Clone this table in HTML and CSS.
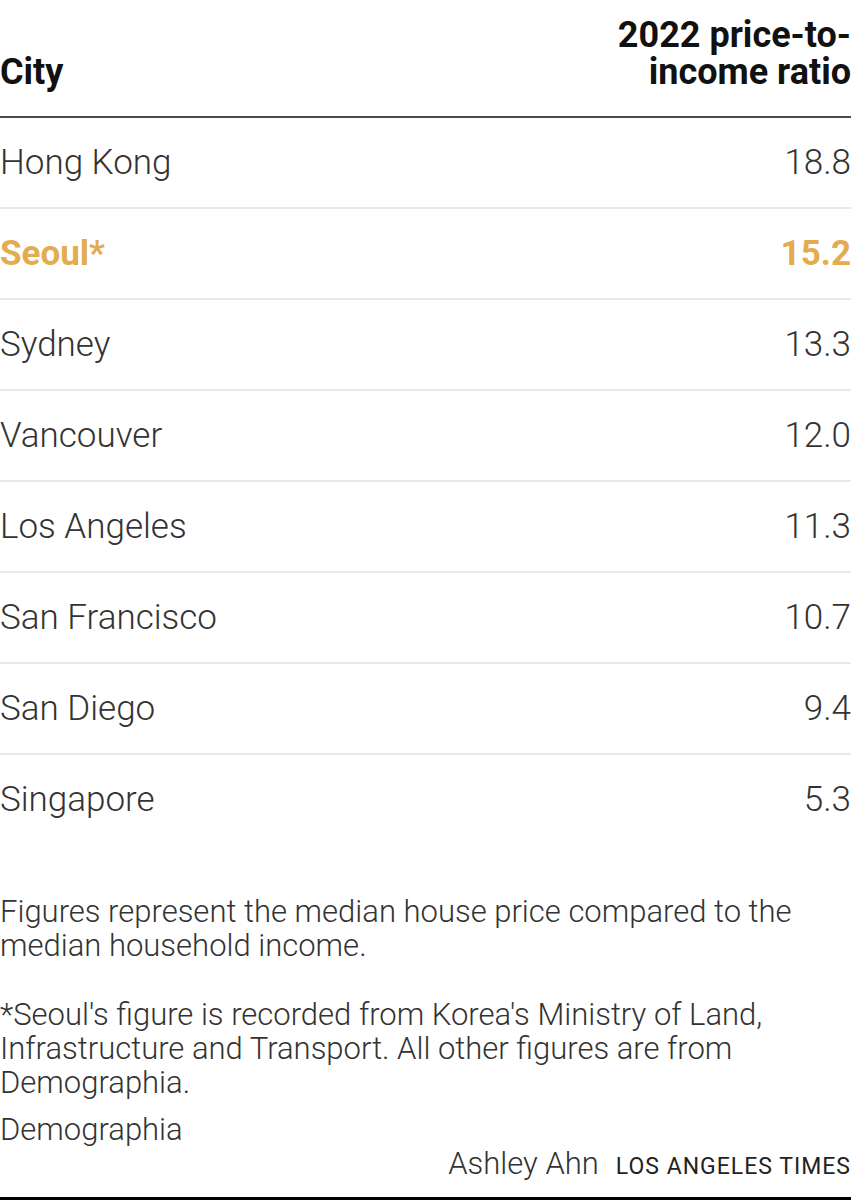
FILE: index.html
```html
<!DOCTYPE html>
<html>
<head>
<meta charset="utf-8">
<link rel="stylesheet" href="styles.css">
</head>
<body>
<div class="graphic">
  <div class="table">
    <div class="thead">
      <div class="th th-city">City</div>
      <div class="th th-val">2022 price-to-<br>income ratio</div>
    </div>
    <div class="row"><div class="city">Hong Kong</div><div class="val">18.8</div></div>
    <div class="row hl"><div class="city">Seoul*</div><div class="val">15.2</div></div>
    <div class="row"><div class="city">Sydney</div><div class="val">13.3</div></div>
    <div class="row"><div class="city">Vancouver</div><div class="val">12.0</div></div>
    <div class="row"><div class="city">Los Angeles</div><div class="val">11.3</div></div>
    <div class="row"><div class="city">San Francisco</div><div class="val">10.7</div></div>
    <div class="row"><div class="city">San Diego</div><div class="val">9.4</div></div>
    <div class="row last"><div class="city">Singapore</div><div class="val">5.3</div></div>
  </div>
  <div class="notes">
    <p class="note">Figures represent the median house price compared to the median household income.</p>
    <p class="note">*Seoul's figure is recorded from Korea's Ministry of Land, Infrastructure and Transport. All other figures are from Demographia.</p>
    <p class="source">Demographia</p>
    <div class="credit"><span class="author">Ashley Ahn</span><span class="org">LOS ANGELES TIMES</span></div>
  </div>
  <div class="bottom-bar"></div>
</div>
</body>
</html>
```
FILE: styles.css
```css
html, body {
  margin: 0;
  padding: 0;
  background: #fff;
}
body {
  font-family: Roboto, "Liberation Sans", sans-serif;
  color: #333;
}
.graphic {
  width: 851px;
  height: 1200px;
  display: flex;
  flex-direction: column;
  overflow: hidden;
}
.thead {
  display: flex;
  justify-content: space-between;
  align-items: flex-end;
  padding-top: 17px;
  padding-bottom: 25px;
  border-bottom: 2px solid #4a4a4a;
}
.th {
  font-weight: 700;
  font-size: 36px;
  line-height: 37px;
  color: #111;
}
.th-val {
  text-align: right;
  white-space: nowrap;
}
.row {
  display: flex;
  justify-content: space-between;
  align-items: center;
  height: 89px;
  border-bottom: 2px solid #e8e8e8;
  font-size: 35px;
  font-weight: 300;
  color: #333;
}
.row.last {
  border-bottom: none;
}
.row.hl {
  color: #e3ac4f;
  font-weight: 700;
}
.notes {
  margin-top: 51px;
  font-size: 31px;
  font-weight: 300;
  line-height: 34px;
  color: #333;
}
.note {
  margin: 0 0 35px 0;
}
.note + .note {
  margin-bottom: 13px;
}
.source {
  margin: 0;
}
.credit {
  display: flex;
  justify-content: flex-end;
  align-items: baseline;
  gap: 17px;
  margin-top: 0;
}
.author {
  font-size: 31px;
  font-weight: 300;
}
.org {
  font-size: 23px;
  font-weight: 400;
  letter-spacing: 1px;
  color: #222;
}
.bottom-bar {
  margin-top: auto;
  height: 3px;
  background: #000;
}
```
